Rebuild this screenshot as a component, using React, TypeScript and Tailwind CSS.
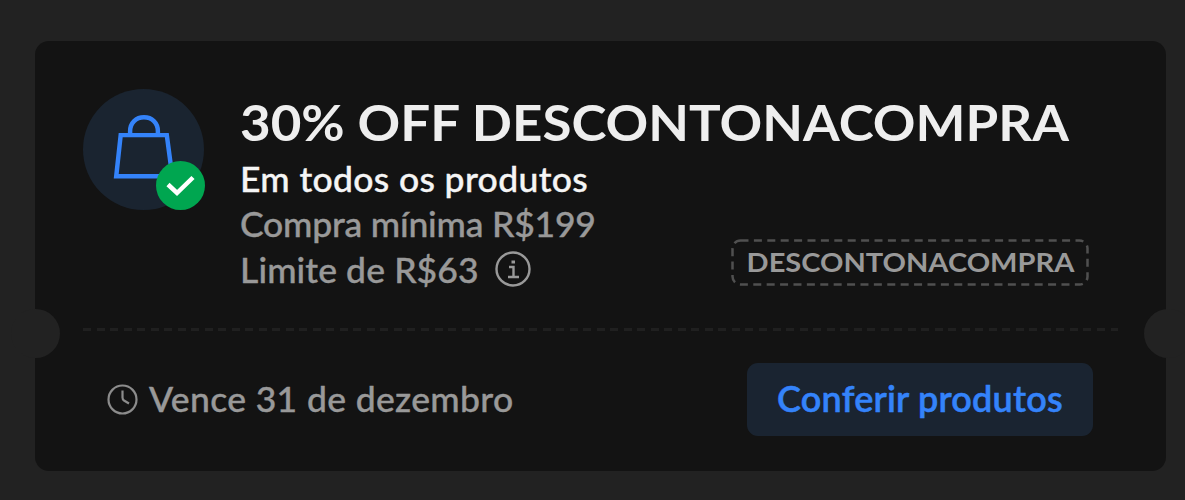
function BagIcon() {
  return (
    <svg className="h-full w-full" viewBox="0 0 122 122" fill="none">
      <circle cx="61" cy="61" r="61" fill="#1a2430" />
      <path
        d="M38 46.500H84.500L90 88H33.500L38 46.500ZM47.500 46V42.500C47.500 34 53.500 28.500 61.500 28.500S75.500 34 75.500 42.500V46"
        stroke="#3483fa"
        strokeWidth="4.500"
      />
    </svg>
  );
}

function CheckBadge() {
  return (
    <svg className="absolute -right-[0.5px] bottom-0 h-[49px] w-[49px]" viewBox="0 0 49 49" fill="none">
      <circle cx="24.500" cy="24.500" r="24.500" fill="#00a650" />
      <path d="M12 23.500L21 32L37 16.500" stroke="#fff" strokeWidth="4.500" />
    </svg>
  );
}

function InfoIcon() {
  return (
    <svg className="h-9 w-9" viewBox="0 0 36 36" fill="none" stroke="#999" strokeWidth="2.400">
      <circle cx="18" cy="18" r="16.500" />
      <path d="M14 16H18.500V26M13 26H24" />
      <path d="M16.500 11H20" strokeWidth="3" />
    </svg>
  );
}

function ClockIcon() {
  return (
    <svg className="h-[31px] w-[31px]" viewBox="0 0 31 31" fill="none" stroke="#8c8c8c" strokeWidth="2.200">
      <circle cx="15.500" cy="15.500" r="14" />
      <path d="M15.500 6.500V13.500Q15.500 15.500 17 16.500L22 19.500" />
    </svg>
  );
}

function CouponCode({ code }: { code: string }) {
  return (
    <div className="relative flex h-[47px] w-[358px] items-center justify-center">
      <svg className="absolute inset-0 h-full w-full" viewBox="0 0 358 47" fill="none">
        <rect
          x="1.500"
          y="1.500"
          width="355"
          height="44"
          rx="8"
          stroke="#505050"
          strokeWidth="2.500"
          strokeDasharray="8 5.400"
        />
      </svg>
      <span className="-mt-0.5 scale-x-[1.075] whitespace-nowrap text-[27px] font-bold leading-none text-[#999]">
        {code}
      </span>
    </div>
  );
}

export default function App() {
  return (
    <main className="h-[500px] w-[1185px] overflow-hidden bg-[#222] pl-[35px] pt-[40.5px] font-['Lato',sans-serif]">
      <article className="relative flex h-[430px] w-[1131px] flex-col rounded-[14px] bg-[#131313]">
        <span className="absolute -left-[24.5px] top-[268.5px] h-[49px] w-[49px] rounded-full bg-[#222]" />
        <span className="absolute -right-[27px] top-[268.5px] h-[49px] w-[49px] rounded-full bg-[#222]" />

        <section className="flex h-[287px] pl-12 pt-12">
          <div className="relative h-[121px] w-[121px] shrink-0">
            <BagIcon />
            <CheckBadge />
          </div>
          <div className="ml-9 w-[491px] shrink-0 whitespace-nowrap pt-[3px] text-[35.5px] font-medium leading-[45.5px] [-webkit-text-stroke:0.4px_currentColor]">
            <h1 className="mb-1 w-max origin-left scale-x-[1.058] text-[50px] font-bold leading-[60px] text-[#eee] [-webkit-text-stroke:0]">
              30% OFF DESCONTONACOMPRA
            </h1>
            <p className="tracking-[0.35px] text-[#f5f5f5]">Em todos os produtos</p>
            <p className="tracking-[-0.2px] text-[#999]">Compra mínima R$199</p>
            <div className="flex items-center text-[#999]">
              <p className="mr-4 tracking-[0.1px]">Limite de R$63</p>
              <InfoIcon />
            </div>
          </div>
          <div className="mt-[150px]">
            <CouponCode code="DESCONTONACOMPRA" />
          </div>
        </section>

        <div className="ml-12 h-[3px] w-[1035px] bg-[repeating-linear-gradient(90deg,#202020_0_8px,transparent_8px_13.52px)]" />

        <footer className="flex items-center pl-[72px] pr-[73px] pt-8">
          <ClockIcon />
          <p className="-mt-px ml-[11px] whitespace-nowrap text-[35.5px] font-medium leading-[46px] tracking-[0.35px] text-[#999] [-webkit-text-stroke:0.4px_currentColor]">
            Vence 31 de dezembro
          </p>
          <button
            type="button"
            className="ml-auto h-[73px] w-[346px] whitespace-nowrap rounded-[11px] bg-[#1a2431] pb-[3px] text-[36px] font-semibold leading-none tracking-[0.2px] text-[#3483fa] [-webkit-text-stroke:0.5px_currentColor]"
          >
            Conferir produtos
          </button>
        </footer>
      </article>
    </main>
  );
}
